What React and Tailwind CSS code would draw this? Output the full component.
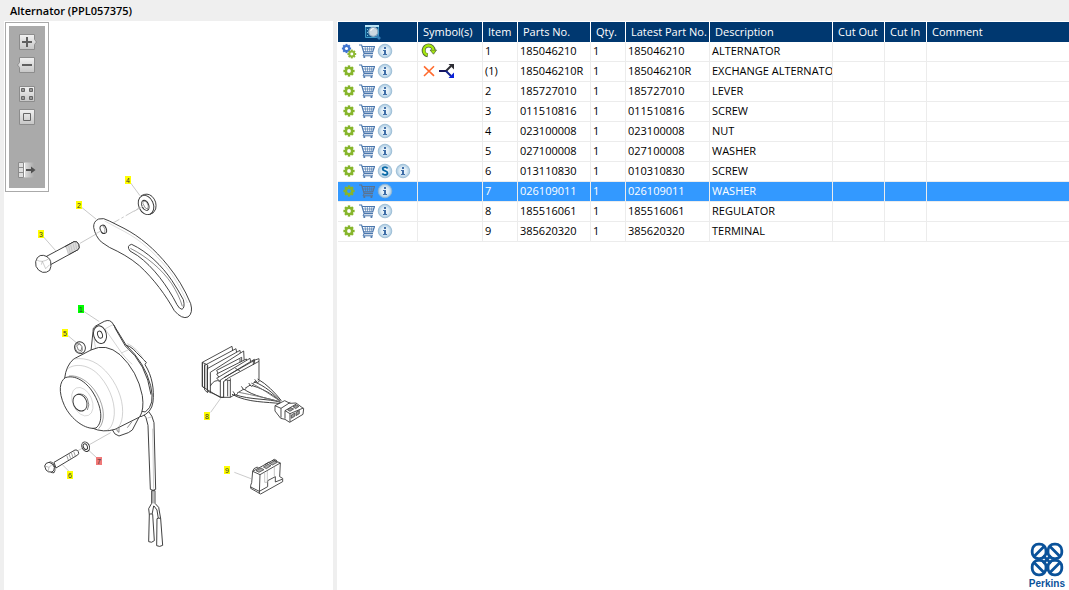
import { useState } from "react";
import clsx from "clsx";

const PARTS = [
  { item: "1", partNo: "185046210", latest: "185046210", desc: "ALTERNATOR", assembly: true, symbols: ["reman"] },
  { item: "(1)", partNo: "185046210R", latest: "185046210R", desc: "EXCHANGE ALTERNATO", symbols: ["removed", "split"] },
  { item: "2", partNo: "185727010", latest: "185727010", desc: "LEVER" },
  { item: "3", partNo: "011510816", latest: "011510816", desc: "SCREW" },
  { item: "4", partNo: "023100008", latest: "023100008", desc: "NUT" },
  { item: "5", partNo: "027100008", latest: "027100008", desc: "WASHER" },
  { item: "6", partNo: "013110830", latest: "010310830", desc: "SCREW", superseded: true },
  { item: "7", partNo: "026109011", latest: "026109011", desc: "WASHER" },
  { item: "8", partNo: "185516061", latest: "185516061", desc: "REGULATOR" },
  { item: "9", partNo: "385620320", latest: "385620320", desc: "TERMINAL" },
];

const CALLOUTS = [
  { id: "4", x: 128, y: 180, fill: "#ffff00" },
  { id: "2", x: 79, y: 205, fill: "#ffff00" },
  { id: "3", x: 41, y: 234, fill: "#ffff00" },
  { id: "1", x: 81, y: 309, fill: "#00ff00" },
  { id: "5", x: 65, y: 333, fill: "#ffff00" },
  { id: "7", x: 99, y: 461, fill: "#f07878" },
  { id: "6", x: 70, y: 475, fill: "#ffff00" },
  { id: "8", x: 207, y: 416, fill: "#ffff00" },
  { id: "9", x: 227, y: 470, fill: "#ffff00" },
];

const TEETH = [0, 45, 90, 135, 180, 225, 270, 315];

function Gear({ cx, cy, r, color, hole = "#fff" }) {
  return (
    <g transform={`translate(${cx} ${cy})`}>
      {TEETH.map((a) => (
        <rect key={a} x={-r * 0.22} y={-r} width={r * 0.44} height={r} fill={color} transform={`rotate(${a})`} />
      ))}
      <circle r={r * 0.78} fill={color} />
      <circle r={r * 0.34} fill={hole} />
    </g>
  );
}

function GearIcon({ double, selected }) {
  return (
    <svg viewBox="0 0 16 16" className="h-4 w-4">
      {double ? (
        <>
          <Gear cx={5.5} cy={5.5} r={4.6} color="#3f74cf" />
          <Gear cx={10.8} cy={11} r={4.4} color="#8fb935" />
        </>
      ) : (
        <Gear cx={8} cy={8} r={5.6} color="#86b52b" hole={selected ? "#3399ff" : "#fff"} />
      )}
    </svg>
  );
}

function CartIcon({ selected }) {
  const color = selected ? "#5b7390" : "#4c78ae";
  return (
    <svg viewBox="0 0 16 16" className="h-4 w-4" fill="none" stroke={color}>
      <path d="M0 2h2.6l2.6 8.6H14" strokeWidth="1.2" />
      <path d="M3 3.5h12.5l-1.8 5.3H4.8" strokeWidth="1.2" />
      <path d="M6 3.5l.8 5M8.3 3.5l.3 5M10.7 3.5v5M13 3.5l-.8 5M3.6 6h11" strokeWidth=".7" />
      <path d="M5 10.8l-1 2H14" strokeWidth="1" />
      <circle cx="5.3" cy="14" r="1.1" fill={color} stroke="none" />
      <circle cx="12.4" cy="14" r="1.1" fill={color} stroke="none" />
    </svg>
  );
}

function Badge({ children }) {
  return (
    <svg viewBox="0 0 16 16" className="h-4 w-4">
      <circle cx="8" cy="8" r="6.8" fill="url(#badge)" stroke="#94b8d2" strokeWidth=".8" />
      {children}
    </svg>
  );
}

function InfoIcon() {
  return (
    <Badge>
      <path d="M7 4h2v2H7zM6 7h3v4h1v1H6v-1h1V8H6z" fill="#3f6ea8" />
    </Badge>
  );
}

function SupersededIcon() {
  return (
    <Badge>
      <path
        d="M10.6 5.4C10 4.5 9.2 4.2 8.1 4.2c-1.5 0-2.4.7-2.4 1.8 0 2.5 4.8 1.3 4.8 3.9 0 1.2-1 1.9-2.5 1.9-1.1 0-2.1-.4-2.7-1.3"
        fill="none"
        stroke="#0868a6"
        strokeWidth="1.8"
      />
    </Badge>
  );
}

function SymbolIcon({ type }) {
  return (
    <svg viewBox="0 0 16 16" className="h-4 w-4" fill="none">
      {type === "reman" && (
        <>
          <path d="M6.8 12.4a5 5 0 1 1 5.8-5.2" stroke="#50643c" strokeWidth="4" />
          <path d="M9 7h6.5l-3 4.2z" fill="#a5e80c" stroke="#50643c" strokeWidth=".8" />
          <path d="M6.4 12a4.8 4.8 0 1 1 6-5" stroke="#a5e80c" strokeWidth="2.4" />
        </>
      )}
      {type === "removed" && (
        <path d="M3 3.4l10 9.4M13 3.2L3 13" stroke="#ff6a2d" strokeWidth="1.6" />
      )}
      {type === "split" && (
        <>
          <path d="M0 8h7" stroke="#171760" strokeWidth="2" />
          <path d="M7 8l5-5" stroke="#2d2d33" strokeWidth="2" />
          <path d="M7 8l5 5" stroke="#10208c" strokeWidth="2" />
          <path d="M9.5 1H15v5.5z" fill="#2d2d33" />
          <path d="M15 9.5V15H9.5z" fill="#0a22d8" />
        </>
      )}
    </svg>
  );
}

function PreviewIcon() {
  return (
    <svg viewBox="0 0 18 18" className="h-[18px] w-[18px]">
      <path d="M1.5 2.5h13v12h-13z" fill="#0f5488" stroke="#3d9ac7" />
      <path d="M1 2h14v2H1z" fill="#b9e4f5" />
      <path d="M3.5 6v1M3.5 9v1M3.5 12v1" stroke="#7cc4e3" />
      <path d="M12 12l4 4" stroke="#347db5" strokeWidth="2.6" />
      <circle cx="9.3" cy="8.8" r="4.5" fill="#ccd8e0" stroke="#8facc4" strokeWidth="1.2" />
      <path d="M6.7 8a3 3 0 0 1 3-2.5" stroke="#fff" fill="none" />
    </svg>
  );
}

function ToolButton({ label, children }) {
  return (
    <button type="button" aria-label={label} className="h-[18px] w-5">
      <svg viewBox="0 0 20 18" className="h-[18px] w-5">
        {children}
      </svg>
    </button>
  );
}

function Toolbar() {
  return (
    <div className="absolute left-px top-px border border-[#aaaaaa] bg-white p-[3px]">
      <div className="flex h-[162px] w-9 flex-col items-center bg-[#aaaaaa] pt-[7px]">
        <ToolButton label="Zoom in">
          <path d="M2.5 1.5h15v5l2 2.5-2 2.5v5h-15z" fill="url(#tool)" stroke="#8c8c8c" />
          <path d="M10 4v10M5 9h10" stroke="#606060" strokeWidth="2" />
        </ToolButton>
        <div className="h-[5px]" />
        <ToolButton label="Zoom out">
          <path d="M2.5 1.5h15v15h-15v-5L.5 9l2-2.5z" fill="url(#tool)" stroke="#8c8c8c" />
          <path d="M5 9h10" stroke="#606060" strokeWidth="2" />
        </ToolButton>
        <div className="h-[11px]" />
        <ToolButton label="Fit all">
          <path d="M2.5 1.5h15v15h-15z" fill="url(#tool)" stroke="#8c8c8c" />
          <path
            d="M4.5 3.5h3v3h-3zM12.5 3.5h3v3h-3zM4.5 11.5h3v3h-3zM12.5 11.5h3v3h-3z"
            fill="#999"
            stroke="#666"
          />
        </ToolButton>
        <div className="h-[5px]" />
        <ToolButton label="Actual size">
          <path d="M2.5 1.5h15v15h-15z" fill="url(#tool)" stroke="#8c8c8c" />
          <path d="M6.5 5.5h7v7h-7z" fill="none" stroke="#666" />
        </ToolButton>
        <div className="h-[35px]" />
        <ToolButton label="Hide list">
          <path d="M6 1.5h11v15H6z" fill="url(#fade)" />
          <path d="M1.5 1.5h5v15h-5zM1.5 6.5h5M1.5 11.5h5" fill="#dedede" stroke="#8c8c8c" />
          <path d="M7.5 2v14" stroke="#fff" />
          <path d="M9 9h6" stroke="#505050" strokeWidth="2" />
          <path d="M14 5.5L18.5 9 14 12.5z" fill="#505050" />
        </ToolButton>
      </div>
    </div>
  );
}

function Diagram() {
  return (
    <svg
      viewBox="4 21 329 569"
      className="h-[569px] w-full"
      preserveAspectRatio="xMinYMin meet"
      role="img"
      aria-label="Alternator exploded view"
    >
      {/* lever, screw and nut */}
      <g transform="translate(20 165) scale(.33333)" fill="#fff" stroke="#333" strokeWidth="2.8" strokeLinejoin="round">
        <g stroke="#c4c4c4">
          <path d="M332 54l28 38M186 128l42 34M70 215l37 42M180 235l66-38" />
          <path d="M272 178l98-56" strokeDasharray="30 7 8 7" />
        </g>
        <path d="M364 92Q382 82 396 94Q412 110 407 132Q402 146 390 148z" />
        <ellipse cx="378" cy="120" rx="22" ry="30" transform="rotate(-24 378 120)" />
        <ellipse cx="376" cy="121" rx="10" ry="16" transform="rotate(-24 376 121)" />
        <path d="M368 114l4-6 8 3 5 12-2 9-7-3z" strokeWidth="1.5" />
        <path d="M370 123l-28 16" stroke="#c4c4c4" />
        <path d="M236 162Q250 157 268 168L312 190C360 215 404 252 444 302C470 334 494 372 512 416Q520 444 504 456Q486 464 463 437C438 392 402 342 358 302C330 278 300 262 268 247L244 231Q226 214 221 187Q220 169 236 162Z" />
        <path d="M254 168l60 32c46 24 88 62 126 108 24 30 44 64 62 106" fill="none" stroke="#bbb" strokeWidth="1.5" />
        <ellipse cx="250" cy="193" rx="9" ry="13" transform="rotate(-22 250 193)" />
        <path d="M248 182q11 9 6 22" fill="none" strokeWidth="1.5" />
        <path d="M335 238C382 260 426 302 456 347Q474 374 490 404Q496 428 486 433Q478 432 471 419C442 362 400 306 353 272L330 258Q318 242 335 238Z" />
        <path d="M331 250c48 24 94 62 124 106 14 22 26 46 32 68" fill="none" strokeWidth="1.7" />
        <path d="M244 197l-18 10" stroke="#c4c4c4" />
        <path d="M76 276l86-46q9-3 14 8 4 12-2 16l-84 46z" />
        <path d="M135 246l27-16q10-3 14 8 4 12-2 16l-28 15q-3-14-11-23z" fill="#dedede" stroke="none" />
        <path d="M139 246l6 22M146 243l5 22M152 239l5 22M159 235l5 21M166 232l4 20" stroke="#aaa" strokeWidth="1.5" />
        <path d="M135 245l27-15q10-3 14 8 4 12-2 16l-28 15" fill="none" />
        <path d="M52 278Q60 269 70 271Q88 275 92 290Q95 305 89 316Q80 324 68 322Q54 318 48 304Q44 289 52 278Z" />
        <path d="M49 284q8 6 18 5 10-1 20-8M67 289l-3 10M67 289l10 22 12-12" fill="none" strokeWidth="1.5" stroke="#999" />
      </g>

      {/* wiring tail and lower screw */}
      <g transform="translate(30 400) scale(.33333)" fill="#fff" stroke="#333" strokeWidth="2.8" strokeLinejoin="round">
        <path d="M178 134l64-36M144 152l14-8M175 150l28 26M97 194l20 20" stroke="#c4c4c4" />
        <path d="M334 32q18 20 20 44l7 192q8 6 16 0l-5-200q-2-18-22-42z" />
        <path d="M353 54l14-4M368 86l3 180" fill="none" stroke="#999" strokeWidth="1.5" />
        <path d="M365 272v38l-9 16 2 18h8l5-26h1l9 12 4 26h7l-6-34-11-12v-38z" />
        <path d="M369 272v38" strokeWidth="2" />
        <path d="M358 343q5-3 10 0l5 79q-8 8-17 3z" />
        <path d="M381 356q6-4 11 0l6 80q-9 6-18 1z" />
        <path d="M72 187l63-37q7-2 10 5 3 7-2 10l-65 39z" />
        <path d="M110 166l5 14M117 162l5 14M124 158l5 14M131 154l5 14" stroke="#999" />
        <ellipse cx="65" cy="202" rx="9" ry="17" transform="rotate(-18 65 202)" />
        <path d="M44 198Q46 188 57 187Q68 188 73 202Q74 212 66 216Q54 218 48 210Z" />
        <path d="M44 198l13 4 10-9M57 202l-3 14" fill="none" stroke="#888" strokeWidth="1.5" />
        <ellipse cx="167" cy="140" rx="11" ry="15" transform="rotate(-24 167 140)" />
        <ellipse cx="166" cy="140" rx="6" ry="9" transform="rotate(-24 166 140)" />
      </g>

      {/* alternator body */}
      <g transform="translate(40 295) scale(.33333)" fill="#fff" stroke="#333" strokeWidth="2.8" strokeLinejoin="round">
        <path d="M128 47l50 33M84 122l24 20" stroke="#c4c4c4" />
        <ellipse cx="120" cy="158" rx="16" ry="18" transform="rotate(-20 120 158)" />
        <ellipse cx="116" cy="159" rx="10" ry="14" transform="rotate(-20 116 159)" strokeWidth="1.6" />
        <path d="M110 152l9-5 7 8-3 12-8-2z" strokeWidth="1.8" />
        <path d="M215 401q8 20 22 22l28-10 12-8 24-46-50 10z" />
        <path d="M229 398q2 14 8 14v-14M262 398l14-18" fill="none" strokeWidth="1.7" />
        <path d="M244 148q28 2 45 24l30 30-4 7c22 34 28 76 24 112q-4 32-36 44l-60-20z" />
        <path d="M262 146q30 12 53 55" fill="none" stroke="#999" strokeWidth="1.5" />
        <path d="M153 168l6-58q-2-12 8-17l26-14q18-8 27 9l38 62q56 52 74 122 14 58-16 79l-100-20z" />
        <path d="M220 88q4 5 6 13l30 52q64 54 77 146" fill="none" />
        <path d="M195 102l50 72q16 22 32 34M195 102l25-14M168 168l-9-55M244 174l22-10" fill="none" stroke="#aaa" strokeWidth="1.5" />
        <ellipse cx="180" cy="119" rx="19" ry="27" transform="rotate(-14 180 119)" />
        <ellipse cx="180" cy="119" rx="7" ry="11" transform="rotate(-18 180 119)" />
        <path d="M74 250Q78 212 101 192L153 165Q198 143 240 179Q293 229 307 302Q313 344 299 366L225 403Q190 414 156 399Z" />
        <g fill="none" stroke="#aaa" strokeWidth="1.6">
          <path d="M101 192c42-6 76 10 107 49 30 39 44 85 39 124-2 18-9 32-20 39" />
          <path d="M82 222c22-18 66-15 98 22 34 39 49 92 41 128-4 20-12 30-20 34" />
          <path d="M87 243c27-4 62 16 84 54 24 42 25 82 5 104" stroke="#555" />
          <path d="M93 248c30 3 53 20 72 54" />
        </g>
        <path d="M76 248C105 238 138 260 158 291C187 337 190 382 168 399C138 406 93 374 73 331C54 289 59 259 76 248Z" />
        <ellipse cx="127" cy="320" rx="29" ry="45" transform="rotate(-24 127 320)" stroke="#bbb" strokeWidth="1.5" />
        <ellipse cx="120" cy="323" rx="20" ry="26" transform="rotate(-25 120 323)" />
        <path d="M112 298q20-5 30 13 9 20 0 34" fill="none" strokeWidth="1.8" />
      </g>

      {/* regulator and terminal */}
      <g transform="translate(190 335) scale(.33333)" fill="#fff" stroke="#333" strokeWidth="2.6" strokeLinejoin="round">
        <path d="M62 232l30-42M133 412l50 19" stroke="#c4c4c4" />
        <path d="M37 82l89-48 4 24-78 44v64l-15-12z" />
        <path d="M44 91l94-50 3 18-88 50v64l-9-8z" />
        <path d="M52 101l98-55 3 24-90 48v56l-11-7z" />
        <path d="M61 112l100-64 3 56-72 82-31-14z" />
        <path d="M37 82v73l53 32M44 88v71M52 92v74M37 82l16 8v14M61 153q12-22 30-14" fill="none" />
        <path d="M80 106l75-39v18l-68 36z" />
        <path d="M80 117l89-45 4 18-82 43z" />
        <path d="M80 130l100-60 4 20-93 50z" />
        <path d="M91 135l102-62 2 20-94 47v47H91z" />
        <path d="M91 187h30l86-53V79l-92 50-14 11v47M113 136v48M121 130v57M105 134l16 3" />
        <path d="M102 128l93-53 12-4v8" fill="none" />
        <path d="M136 100l14 8M150 72v10M190 76v14" fill="none" />
        <g fill="none" strokeWidth="2.8">
          <path d="M132 178c50 18 104 12 140 24M126 178c48 26 105 22 146 28M157 159c36 28 80 30 113 42M178 150c32 7 66 24 91 48M192 140c34 14 57 34 80 59M203 132c28 16 50 39 71 65" />
          <path d="M147 172c40 8 91 19 124 29M184 144c34 18 57 36 86 54" stroke="#777" />
        </g>
        <path d="M129 169l8 12 7-6M154 154l8 11 7-5M176 144l8 10 7-5M194 133l8 10 7-5" />
        <path d="M255 212l29-15 16 8 18-1 23 17-2 17-40 24-14-9-13-3-17-22z" />
        <path d="M255 212l18 8v28M273 220l28-18M285 227l34-20M285 227v24M285 227l15 9 40-17M300 236v25" fill="none" />
        <path d="M304 240l10-6v10l-10 6zM318 232l10-6v10l-10 6zM292 224l10-6 9 4-11 7zM309 215l10-5 8 4-10 7z" fill="#999" strokeWidth="2" />
        <path d="M188 409l62-34 21 9-2 41 9 5v10l-66 37-30-17v-9l3-8z" />
        <path d="M188 409l22 10 61-35M210 419l-2 57M182 456l26 13 25-14v-18l23-12v16l20-8" fill="none" />
        <path d="M198 407l15-8 9 5-15 8zM220 396l14-8 9 4-14 9zM239 385l14-7 9 4-15 8z" fill="#aaa" strokeWidth="2" />
        <path d="M188 409l4-8 10-5 4 4M224 389l12-7 5 4M246 378l7-5 8 4" fill="none" />
        <path d="M224 412v30h8v-34M253 395v28" fill="none" stroke="#aaa" strokeWidth="2" />
      </g>

      {CALLOUTS.map((c) => (
        <g key={c.id} transform={`translate(${c.x} ${c.y})`}>
          <rect x="-3" y="-4" width="6" height="8" fill={c.fill} />
          <text fontFamily="Liberation Sans, sans-serif" fontSize="7" textAnchor="middle" y="3" fill="#333">
            {c.id}
          </text>
        </g>
      ))}
    </svg>
  );
}

function PerkinsLogo() {
  return (
    <div className="flex flex-col items-center font-['Liberation_Sans',sans-serif] text-[#0a529a]">
      <svg viewBox="0 0 34 36" className="h-9 w-[34px]" fill="none" stroke="currentColor" strokeWidth="2.8">
        <rect x="2.2" y="2.2" width="13.8" height="14.4" rx="6.2" />
        <rect x="18" y="2.2" width="13.8" height="14.4" rx="6.2" />
        <rect x="2.2" y="18.4" width="13.8" height="14.4" rx="6.2" />
        <rect x="18" y="18.4" width="13.8" height="14.4" rx="6.2" />
        <path d="M4.5 14L14 4.5M20 4.5l9.5 9.5M4.5 21l9.5 9.5M20 30.5l9.5-9.5" />
        <path d="M13 13.5l8 8M21 13.5l-8 8" strokeWidth="2.6" />
      </svg>
      <span className="text-[10px] font-bold leading-3">Perkins</span>
    </div>
  );
}

function HeadCell({ children }) {
  return (
    <th className="h-5 overflow-hidden whitespace-nowrap border-r border-white pl-[5px] text-left font-normal last:border-r-0">
      {children}
    </th>
  );
}

function Cell({ children }) {
  return (
    <td className="h-5 overflow-hidden whitespace-nowrap border-b border-r border-[#ececec] pb-0.5 pl-0.5 leading-4 last:border-r-0">
      {children}
    </td>
  );
}

function PartRow({ part, selected, onSelect }) {
  return (
    <tr onClick={onSelect} className={clsx(selected ? "bg-[#3399ff] text-white" : "text-black")}>
      <Cell>
        <div className="flex gap-0.5 pl-px">
          <button type="button" aria-label="Part details">
            <GearIcon double={part.assembly} selected={selected} />
          </button>
          <button type="button" aria-label="Add to cart">
            <CartIcon selected={selected} />
          </button>
          {part.superseded && (
            <button type="button" aria-label="Supersession">
              <SupersededIcon />
            </button>
          )}
          <button type="button" aria-label="Information">
            <InfoIcon />
          </button>
        </div>
      </Cell>
      <Cell>
        <div className="flex gap-0.5 pl-px">
          {part.symbols?.map((s) => (
            <SymbolIcon key={s} type={s} />
          ))}
        </div>
      </Cell>
      <Cell>{part.item}</Cell>
      <Cell>{part.partNo}</Cell>
      <Cell>1</Cell>
      <Cell>{part.latest}</Cell>
      <Cell>{part.desc}</Cell>
      <Cell />
      <Cell />
      <Cell />
    </tr>
  );
}

export default function App() {
  const [selected, setSelected] = useState("7");

  return (
    <div className="flex min-h-screen flex-col bg-[#efefef] font-['Open_Sans','Noto_Sans',sans-serif] text-[11px] leading-4 text-black">
      <svg className="absolute h-0 w-0" aria-hidden="true">
        <defs>
          <radialGradient id="badge">
            <stop offset="0" stopColor="#f1f8fc" />
            <stop offset=".55" stopColor="#dcebf5" />
            <stop offset="1" stopColor="#a3c5dd" />
          </radialGradient>
          <linearGradient id="tool" x1="0" y1="0" x2="0" y2="1">
            <stop offset="0" stopColor="#f2f2f2" />
            <stop offset="1" stopColor="#c6c6c6" />
          </linearGradient>
          <linearGradient id="fade">
            <stop offset="0" stopColor="#e8e8e8" />
            <stop offset="1" stopColor="#aaaaaa" />
          </linearGradient>
        </defs>
      </svg>

      <h1 className="h-[21px] pl-2.5 pt-[3px] font-semibold">Alternator (PPL057375)</h1>

      <div className="flex flex-1 gap-1 pl-1">
        <section className="relative w-[329px] shrink-0 bg-white">
          <Diagram />
          <Toolbar />
        </section>

        <section className="flex min-w-0 flex-1 flex-col bg-white pl-px pt-px">
          <table className="w-full table-fixed border-separate border-spacing-0">
            <colgroup>
              <col className="w-20" />
              <col className="w-[65px]" />
              <col className="w-[35px]" />
              <col className="w-[73px]" />
              <col className="w-[35px]" />
              <col className="w-[84px]" />
              <col className="w-[123px]" />
              <col className="w-[52px]" />
              <col className="w-[42px]" />
              <col />
            </colgroup>
            <thead className="bg-[#003870] text-white">
              <tr>
                <th className="h-5 border-r border-white pr-2.5">
                  <button type="button" aria-label="Preview" className="mx-auto block">
                    <PreviewIcon />
                  </button>
                </th>
                <HeadCell>Symbol(s)</HeadCell>
                <HeadCell>Item</HeadCell>
                <HeadCell>Parts No.</HeadCell>
                <HeadCell>Qty.</HeadCell>
                <HeadCell>Latest Part No.</HeadCell>
                <HeadCell>Description</HeadCell>
                <HeadCell>Cut Out</HeadCell>
                <HeadCell>Cut In</HeadCell>
                <HeadCell>Comment</HeadCell>
              </tr>
            </thead>
            <tbody>
              {PARTS.map((part) => (
                <PartRow
                  key={part.item}
                  part={part}
                  selected={part.item === selected}
                  onSelect={() => setSelected(part.item)}
                />
              ))}
            </tbody>
          </table>
          <div className="mt-auto self-end pr-1">
            <PerkinsLogo />
          </div>
        </section>
      </div>
    </div>
  );
}
